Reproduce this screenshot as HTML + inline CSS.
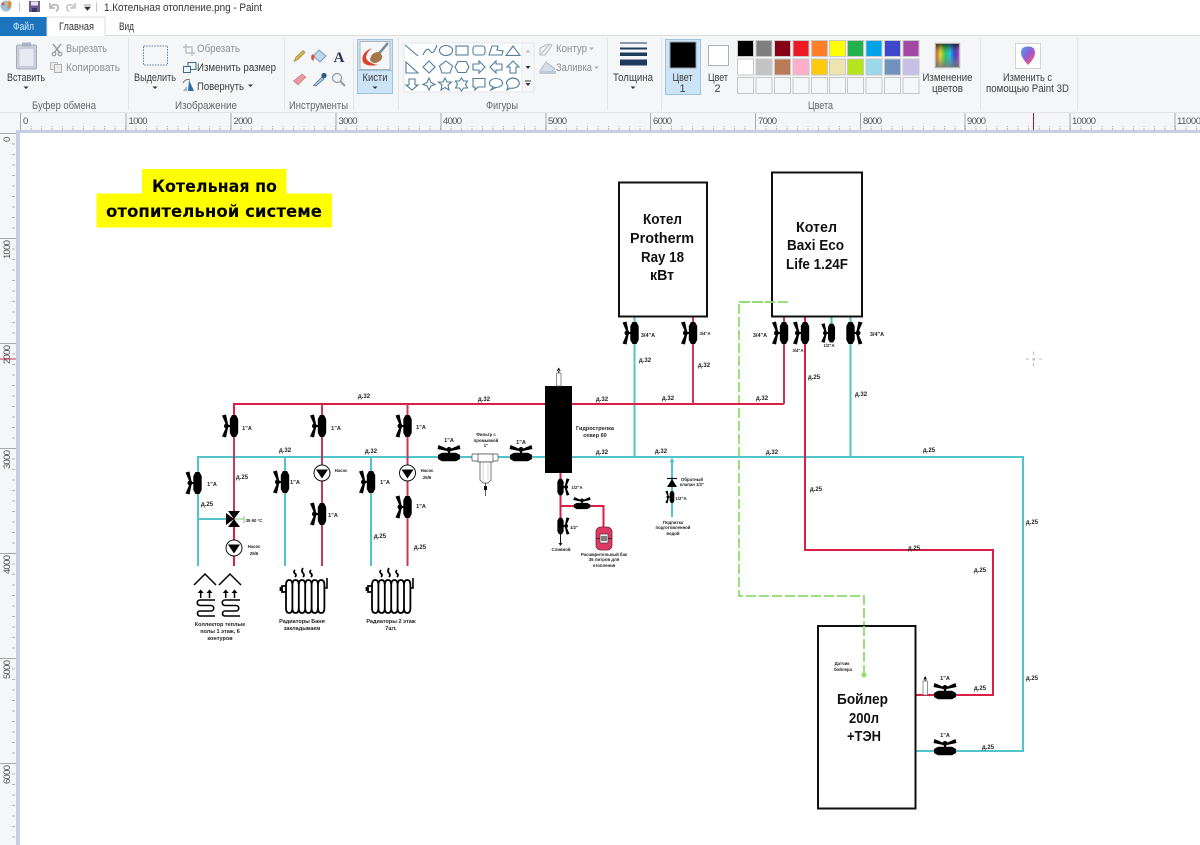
<!DOCTYPE html>
<html lang="ru"><head><meta charset="utf-8"><title>Paint</title>
<style>
html,body{margin:0;padding:0;width:1200px;height:845px;overflow:hidden;background:#fff}
svg{display:block;position:absolute;left:0;top:0;filter:blur(.35px)}
text{font-family:"Liberation Sans","DejaVu Sans",sans-serif}
.r{font-size:11px;fill:#3c3c3c}
.c{text-anchor:middle}
.g{fill:#8e8e8e}
.l{font-size:11px;fill:#666;text-anchor:middle}
.h{font-weight:bold;font-size:14.5px;fill:#111;text-anchor:middle}
.d{font-size:6px;font-weight:bold;fill:#222;text-anchor:middle}
.s{font-size:5.5px;font-weight:bold;fill:#222;text-anchor:middle}
.x{font-size:4.3px;font-weight:bold;fill:#222;text-anchor:middle}
.p{fill:none;stroke-width:2}
.sh{fill:none;stroke:#4f7d9c;stroke-width:1.1}
</style></head><body>
<svg width="1200" height="845" viewBox="0 0 1200 845" xmlns="http://www.w3.org/2000/svg">
<defs>
<g id="v">
<path d="M-2,-11H2L4.200,-7V7L2,11H-2L-4.200,7V-7Z" fill="#000"/>
<rect x="-7.500" y="-1" width="4" height="2" fill="#000"/>
<circle cx="-7.500" cy="0" r="2.500" fill="#000"/>
<path d="M-7.500,0L-12,-10.500L-8,-11.500L-6,-2ZM-7.500,0L-12,10.500L-8,11.500L-6,2Z" fill="#000"/>
</g>
<g id="pu"><circle r="8" fill="#fff" stroke="#111" stroke-width="1"/><path d="M-6,-3.500H6L0,5.500Z" fill="#000"/></g>
<g id="rad">
<path d="M0,5Q0,0 3.200,0Q6.400,0 6.400,5V28Q6.400,33 3.200,33Q0,33 0,28ZM6.400,5Q6.400,0 9.600,0Q12.800,0 12.800,5V28Q12.800,33 9.600,33Q6.400,33 6.400,28ZM12.800,5Q12.800,0 16,0Q19.200,0 19.200,5V28Q19.200,33 16,33Q12.800,33 12.800,28ZM19.200,5Q19.200,0 22.400,0Q25.600,0 25.600,5V28Q25.600,33 22.400,33Q19.200,33 19.200,28ZM25.600,5Q25.600,0 28.800,0Q32,0 32,5V28Q32,33 28.800,33Q25.600,33 25.600,28ZM32,5Q32,0 35.200,0Q38.400,0 38.400,5V28Q38.400,33 35.200,33Q32,33 32,28Z" fill="#fff" stroke="#000" stroke-width="1.800"/>
<path d="M0,6H-4V12H0" fill="none" stroke="#000" stroke-width="1.800"/><path d="M-5.500,7V11" stroke="#000" stroke-width="1.800"/>
<path d="M38.400,8H41V-2" fill="none" stroke="#000" stroke-width="1.600"/>
<path d="M9,-10Q7,-8 9,-6.500Q11,-5 9,-3M17,-12Q15,-9 17,-7Q19,-5 17,-3M25,-10Q23,-8 25,-6.500Q27,-5 25,-3" fill="none" stroke="#000" stroke-width="1.800"/>
</g>
<g id="fl">
<path d="M0,11L11,0L22,11" fill="none" stroke="#000" stroke-width="1.500"/>
<path d="M6.700,24V17M15.500,24V17" stroke="#000" stroke-width="1.500"/>
<path d="M3.700,19L6.700,15.500L9.700,19ZM12.500,19L15.500,15.500L18.500,19Z" fill="#000"/>
<path d="M21,26H6A2.750,2.750 0 0 0 6,31.500H17A2.750,2.750 0 0 1 17,37H6A2.500,2.500 0 0 0 6,42H21" fill="none" stroke="#000" stroke-width="1.600"/>
</g>
<pattern id="tt" x="20" y="0" width="10.5" height="4" patternUnits="userSpaceOnUse"><rect width="1" height="3" fill="#b4b4b4"/></pattern>
<pattern id="tl" x="0" y="133" width="4" height="10.5" patternUnits="userSpaceOnUse"><rect width="3" height="1" fill="#b4b4b4"/></pattern>
<linearGradient id="cg" x1="0" x2="1" y1="0" y2="0"><stop offset="0" stop-color="#e2362c"/><stop offset=".2" stop-color="#ece32a"/><stop offset=".4" stop-color="#28c95a"/><stop offset=".6" stop-color="#1fc5e0"/><stop offset=".8" stop-color="#3040d8"/><stop offset="1" stop-color="#d02ac0"/></linearGradient>
<linearGradient id="cv" x1="0" x2="0" y1="0" y2="1"><stop offset="0" stop-color="#000" stop-opacity=".65"/><stop offset=".45" stop-color="#888" stop-opacity="0"/><stop offset="1" stop-color="#777" stop-opacity=".85"/></linearGradient>
<linearGradient id="p3" x1="0" x2="1" y1="0" y2="1"><stop offset="0" stop-color="#3fa6e8"/><stop offset=".5" stop-color="#9a58d8"/><stop offset=".8" stop-color="#ef5a74"/><stop offset="1" stop-color="#f4b030"/></linearGradient>
</defs>

<rect width="1200" height="845" fill="#fff"/>

<!-- title bar -->
<g>
<circle cx="6" cy="6" r="5.500" fill="#9ec0d8"/><circle cx="3" cy="4" r="1.500" fill="#e25b3a"/><circle cx="8" cy="3" r="1.500" fill="#e8b93c"/><path d="M9,0L12,3L9,9L7,8Z" fill="#d98c44"/>
<rect x="19" y="2" width="1" height="10" fill="#c8c8c8"/>
<rect x="29" y="1" width="11" height="11" fill="#6f5a93"/><rect x="31" y="1.500" width="7" height="4" fill="#e6e2ee"/><rect x="32" y="8" width="5" height="4" fill="#3c3560"/>
<path d="M50,3V8H55M50,8Q54,2.500 58,6Q59,9 56,11.500" fill="none" stroke="#b9b9b9" stroke-width="1.800"/>
<path d="M75,3V8H70M75,8Q71,2.500 67,6Q66,9 69,11.500" fill="none" stroke="#c9c9c9" stroke-width="1.800"/>
<path d="M84,5H91M84.500,7H90.500L87.500,10.500Z" fill="#333" stroke="#333" stroke-width=".5"/>
<rect x="96" y="2" width="1" height="10" fill="#c8c8c8"/>
<text x="104" y="11" font-size="11.200" fill="#333" textLength="158" lengthAdjust="spacingAndGlyphs">1.Котельная отопление.png - Paint</text>
</g>

<!-- tabs -->
<rect x="0" y="17" width="1200" height="19" fill="#fff"/>
<rect x="0" y="35" width="1200" height="1" fill="#dcdddf"/>
<rect x="0" y="17" width="47" height="19" fill="#1b74bd"/>
<text x="23.500" y="30" font-size="11" fill="#d8ecfb" text-anchor="middle" textLength="21" lengthAdjust="spacingAndGlyphs">Файл</text>
<path d="M47,36V17H105V36" fill="#fff" stroke="#dcdddf"/>
<text x="76.500" y="30" font-size="11" fill="#333" text-anchor="middle" textLength="35" lengthAdjust="spacingAndGlyphs">Главная</text>
<text x="126.500" y="30" font-size="11" fill="#333" text-anchor="middle" textLength="15" lengthAdjust="spacingAndGlyphs">Вид</text>

<!-- ribbon -->
<rect x="0" y="36" width="1200" height="76" fill="#f5f6f7"/>
<rect x="0" y="112" width="1200" height="1" fill="#e3e4e6"/>
<g fill="#e4e5e7">
<rect x="128" y="38" width="1" height="72"/><rect x="284" y="38" width="1" height="72"/><rect x="353" y="38" width="1" height="72"/><rect x="398" y="38" width="1" height="72"/><rect x="607" y="38" width="1" height="72"/><rect x="661" y="38" width="1" height="72"/><rect x="980" y="38" width="1" height="72"/><rect x="1077" y="38" width="1" height="72"/>
</g>

<!-- clipboard -->
<rect x="16.500" y="45" width="20" height="24" rx="1.500" fill="#c9ced8" stroke="#a4adbd"/>
<rect x="19" y="48.500" width="15" height="18" fill="#e8eaf2" stroke="#b8bfd0" stroke-width=".6"/>
<rect x="22" y="42.500" width="9" height="4" fill="#aab3c4"/>
<text x="26" y="81" class="r c" textLength="38" lengthAdjust="spacingAndGlyphs">Вставить</text>
<path d="M23.500,86.500H28.500L26,89Z" fill="#333"/>
<path d="M53,44L60,53M61,44L54,53" stroke="#9b9b9b" stroke-width="1.500"/><circle cx="54" cy="54" r="1.800" fill="none" stroke="#9b9b9b" stroke-width="1.200"/><circle cx="60" cy="54" r="1.800" fill="none" stroke="#9b9b9b" stroke-width="1.200"/>
<text x="66" y="52" class="r g" textLength="41" lengthAdjust="spacingAndGlyphs">Вырезать</text>
<rect x="50.500" y="62.500" width="7" height="7" fill="#e8e8e8" stroke="#bdbdbd"/><rect x="54.500" y="64.500" width="7" height="8" fill="#ececec" stroke="#b0b0b0"/>
<text x="66" y="71" class="r g" textLength="54" lengthAdjust="spacingAndGlyphs">Копировать</text>
<text x="64" y="109" class="l" textLength="64" lengthAdjust="spacingAndGlyphs">Буфер обмена</text>

<!-- select -->
<rect x="143.500" y="46" width="24" height="19" fill="none" stroke="#5878a8" stroke-width="1" stroke-dasharray="1.500 1.200"/>
<text x="155" y="81" class="r c" textLength="42" lengthAdjust="spacingAndGlyphs">Выделить</text>
<path d="M152.500,86.500H157.500L155,89Z" fill="#333"/>
<path d="M186,44V53H195M183,47H192V56" fill="none" stroke="#b4b8bd" stroke-width="1.200"/>
<text x="197" y="52" class="r g" textLength="43" lengthAdjust="spacingAndGlyphs">Обрезать</text>
<rect x="188" y="62.500" width="8" height="7" fill="#eef3f8" stroke="#3c6a92"/><rect x="183.500" y="66.500" width="7" height="6" fill="#f5f6f7" stroke="#3c6a92"/>
<text x="197" y="71" class="r" textLength="79" lengthAdjust="spacingAndGlyphs">Изменить размер</text>
<path d="M189,80L194,91H188Z" fill="#2e6ea8"/><path d="M183,91L187,86V91Z" fill="#8fb4d6"/><path d="M183,83Q186,78 190,80" fill="none" stroke="#777" stroke-width="1"/>
<text x="197" y="90" class="r" textLength="47" lengthAdjust="spacingAndGlyphs">Повернуть</text>
<path d="M248,84.500H253L250.500,87Z" fill="#333"/>
<text x="206" y="109" class="l" textLength="62" lengthAdjust="spacingAndGlyphs">Изображение</text>

<!-- tools -->
<path d="M294,61.500L296,57L303,50.500L305,52.500L298,59.500Z" fill="#d9b64d" stroke="#8d7b45" stroke-width=".6"/>
<path d="M319,50L326,56L320,62L313,56Z" fill="#bcd9ee" stroke="#7d9db8"/><path d="M312,54Q310,59 313,61L315,56Z" fill="#d9533a"/>
<text x="339" y="62" font-size="15" font-weight="bold" fill="#1e3350" text-anchor="middle" style="font-family:'Liberation Serif',serif">A</text>
<path d="M293.500,81L302,74L306,77L298,85Z" fill="#e89aa0" stroke="#c47a80" stroke-width=".6"/>
<path d="M313.500,85.500L322,77L324,79L316,86Z" fill="#a9c4dc" stroke="#557a9c" stroke-width=".8"/><circle cx="324" cy="75.500" r="2.600" fill="#2c5b86"/>
<circle cx="337" cy="78" r="4.500" fill="#edf3f8" stroke="#8f9aa4" stroke-width="1.200"/><path d="M340.500,81.500L345,86" stroke="#8f9aa4" stroke-width="2"/>
<text x="318.500" y="109" class="l" textLength="59" lengthAdjust="spacingAndGlyphs">Инструменты</text>

<!-- brush -->
<rect x="357.500" y="39.500" width="35" height="54" fill="#cde4f7" stroke="#9ac3e4"/>
<rect x="360" y="41.500" width="30" height="28" fill="#f4f7fa" stroke="#b3b3b3"/>
<path d="M388,43L376,57" stroke="#7a8b98" stroke-width="2.500"/>
<path d="M379,52Q371,52 370,60Q374,66 381,60Q384,56 379,52Z" fill="#a5764a"/>
<path d="M372,48Q360,53 363,62Q366,67 378,65Q368,63 366,58Q366,53 372,48Z" fill="#d9452a"/>
<rect x="358" y="70" width="34" height="1" fill="#9ac3e4"/>
<text x="375" y="81" class="r c" textLength="25" lengthAdjust="spacingAndGlyphs">Кисти</text>
<path d="M372.500,86.500H377.500L375,89Z" fill="#333"/>

<!-- shapes gallery -->
<rect x="404" y="43" width="118" height="49" fill="#fff" stroke="#e3e6ea"/>
<rect x="522" y="43" width="12" height="49" fill="#f6f7f8" stroke="#e3e6ea"/>
<path d="M525.500,52.500H530.500L528,49.500Z" fill="#bdbdbd"/><path d="M525.500,66H530.500L528,69Z" fill="#333"/><path d="M525,80.500H531V81.500H525ZM525.500,83H530.500L528,86Z" fill="#333"/>
<g class="sh">
<path d="M405,45L418,56"/>
<path d="M423,55Q427,46 430,51T437,45"/>
<ellipse cx="446" cy="50.500" rx="6.500" ry="5"/>
<rect x="456" y="46" width="12" height="9"/>
<rect x="473" y="46" width="12" height="9" rx="2.500"/>
<path d="M489,55L492,46H498L497,50L503,51L502,55Z"/>
<path d="M513,46L506,55.500H520Z"/>
<path d="M406,62V73H418Z"/>
<path d="M429,61L435,67L429,73L423,67Z"/>
<path d="M446,61L452.500,66L450,73H442L439.500,66Z"/>
<path d="M458,61.500H466L469,67L466,72.500H458L455,67Z"/>
<path d="M473,64H479V61L485,67L479,73V70H473Z"/>
<path d="M502,64H496V61L490,67L496,73V70H502Z"/>
<path d="M513,61L519,67H516V73H510V67H507Z"/>
<path d="M409,79H415V85H418L412,90L406,85H409Z" />
<path d="M429,78L431,82.500L435,84.500L431,86L429,90L427,86L423,84.500L427,82.500Z"/>
<path d="M445,78L447,82H451.500L448,85L449,90L445,87.500L441,90L442,85L438.500,82H443Z"/>
<path d="M461.500,78L463.500,81H467.500L465.500,84.500L467.500,88H463.500L461.500,91L459.500,88H455.500L457.500,84.500L455.500,81H459.500Z"/>
<path d="M473,78.500H485V87H478L475,90V87H473Z"/>
<ellipse cx="496" cy="83" rx="6.500" ry="4.500"/><path d="M493,87L491,90L496,87.500"/>
<path d="M508,80Q513,76 518,80Q521,84 517,87Q513,89 510,88L507,90L508,86Q505,83 508,80Z"/>
</g>
<path d="M540,55L540,48L548,44L552,45L545,55Z" fill="none" stroke="#b3b7bc" stroke-width="1"/><path d="M549,45L541,54" stroke="#b3b7bc"/>
<text x="556" y="52" class="r g" textLength="31" lengthAdjust="spacingAndGlyphs">Контур</text>
<path d="M589,47.500H594L591.500,50Z" fill="#b0b0b0"/>
<path d="M546,62L555,69L549,73H540V71Z" fill="#d6dfe8" stroke="#a9bac9"/><rect x="540" y="71" width="16" height="3" fill="#b9cad9"/>
<text x="556" y="71" class="r g" textLength="36" lengthAdjust="spacingAndGlyphs">Заливка</text>
<path d="M594,66.500H599L596.500,69Z" fill="#b0b0b0"/>
<text x="502" y="109" class="l" textLength="32" lengthAdjust="spacingAndGlyphs">Фигуры</text>

<!-- thickness -->
<rect x="620" y="42.500" width="27" height="1" fill="#1f3a5f"/><rect x="620" y="47.500" width="27" height="2" fill="#1f3a5f"/><rect x="620" y="52.500" width="27" height="3.500" fill="#1f3a5f"/><rect x="620" y="59.500" width="27" height="6" fill="#1f3a5f"/>
<text x="633" y="81" class="r c" textLength="40" lengthAdjust="spacingAndGlyphs">Толщина</text>
<path d="M630.500,86.500H635.500L633,89Z" fill="#333"/>

<!-- colors -->
<rect x="665.500" y="39.500" width="35" height="55" fill="#cde4f7" stroke="#9ac3e4"/>
<rect x="670" y="42" width="26" height="26" fill="#000" stroke="#8fa0ad" stroke-width="1"/>
<text x="682.500" y="81" class="r c" textLength="20" lengthAdjust="spacingAndGlyphs">Цвет</text><text x="682.500" y="92" class="r c">1</text>
<rect x="708.500" y="45.500" width="20" height="20" fill="#fff" stroke="#b0b0b0"/>
<text x="718" y="81" class="r c" textLength="20" lengthAdjust="spacingAndGlyphs">Цвет</text><text x="717.500" y="92" class="r c">2</text>
<g stroke="#c8c8c8" stroke-width="1">
<rect x="737.500" y="40.500" width="16" height="16" fill="#000"/><rect x="756" y="40.500" width="16" height="16" fill="#7f7f7f"/><rect x="774.500" y="40.500" width="16" height="16" fill="#880015"/><rect x="793" y="40.500" width="16" height="16" fill="#ed1c24"/><rect x="811.500" y="40.500" width="16" height="16" fill="#ff7f27"/><rect x="829.500" y="40.500" width="16" height="16" fill="#ffff00"/><rect x="847.500" y="40.500" width="16" height="16" fill="#22b14c"/><rect x="866" y="40.500" width="16" height="16" fill="#00a2e8"/><rect x="884.500" y="40.500" width="16" height="16" fill="#3f48cc"/><rect x="903" y="40.500" width="16" height="16" fill="#a349a4"/>
<rect x="737.500" y="59" width="16" height="16" fill="#fff"/><rect x="756" y="59" width="16" height="16" fill="#c3c3c3"/><rect x="774.500" y="59" width="16" height="16" fill="#b97a57"/><rect x="793" y="59" width="16" height="16" fill="#ffaec9"/><rect x="811.500" y="59" width="16" height="16" fill="#ffc90e"/><rect x="829.500" y="59" width="16" height="16" fill="#efe4b0"/><rect x="847.500" y="59" width="16" height="16" fill="#b5e61d"/><rect x="866" y="59" width="16" height="16" fill="#99d9ea"/><rect x="884.500" y="59" width="16" height="16" fill="#7092be"/><rect x="903" y="59" width="16" height="16" fill="#c8bfe7"/>
<g fill="#f5f6f7"><rect x="737.500" y="77.500" width="16" height="16"/><rect x="756" y="77.500" width="16" height="16"/><rect x="774.500" y="77.500" width="16" height="16"/><rect x="793" y="77.500" width="16" height="16"/><rect x="811.500" y="77.500" width="16" height="16"/><rect x="829.500" y="77.500" width="16" height="16"/><rect x="847.500" y="77.500" width="16" height="16"/><rect x="866" y="77.500" width="16" height="16"/><rect x="884.500" y="77.500" width="16" height="16"/><rect x="903" y="77.500" width="16" height="16"/></g>
</g>
<text x="820.500" y="109" class="l" textLength="25" lengthAdjust="spacingAndGlyphs">Цвета</text>
<rect x="935.500" y="43.500" width="24" height="24" fill="url(#cg)" stroke="#b5b5b5" stroke-width="1.500"/><rect x="936" y="44" width="23" height="23" fill="url(#cv)"/>
<text x="947.500" y="81" class="r c" textLength="50" lengthAdjust="spacingAndGlyphs">Изменение</text><text x="947.500" y="92" class="r c" textLength="31" lengthAdjust="spacingAndGlyphs">цветов</text>
<rect x="1015.500" y="43.500" width="25" height="25" fill="#fff" stroke="#d2d2d2"/>
<path d="M1028,65Q1021,57 1021,53Q1021,46.500 1028,46.500Q1035,46.500 1035,53Q1035,58 1028,65Z" fill="url(#p3)"/>
<text x="1027.500" y="81" class="r c" textLength="49" lengthAdjust="spacingAndGlyphs">Изменить с</text><text x="1027.500" y="92" class="r c" textLength="83" lengthAdjust="spacingAndGlyphs">помощью Paint 3D</text>

<!-- rulers -->
<rect x="0" y="113" width="1200" height="17" fill="#f5f6f7"/>
<rect x="0" y="130" width="16" height="715" fill="#f5f6f7"/>
<rect x="20" y="126" width="1180" height="4" fill="url(#tt)"/>
<rect x="12" y="133" width="4" height="712" fill="url(#tl)"/>
<g fill="#a8a8a8">
<rect x="20" y="113" width="1" height="17"/><rect x="125.500" y="113" width="1" height="17"/><rect x="230.500" y="113" width="1" height="17"/><rect x="335.500" y="113" width="1" height="17"/><rect x="440.500" y="113" width="1" height="17"/><rect x="545.500" y="113" width="1" height="17"/><rect x="650" y="113" width="1" height="17"/><rect x="755" y="113" width="1" height="17"/><rect x="860" y="113" width="1" height="17"/><rect x="964.500" y="113" width="1" height="17"/><rect x="1069.500" y="113" width="1" height="17"/><rect x="1174.500" y="113" width="1" height="17"/>
<rect x="0" y="133" width="16" height="1"/><rect x="0" y="238" width="16" height="1"/><rect x="0" y="343" width="16" height="1"/><rect x="0" y="448" width="16" height="1"/><rect x="0" y="553" width="16" height="1"/><rect x="0" y="658" width="16" height="1"/><rect x="0" y="763" width="16" height="1"/>
</g>
<g font-size="9.500" fill="#555">
<text x="23" y="124">0</text><text x="128.500" y="124" textLength="19">1000</text><text x="233.500" y="124" textLength="19">2000</text><text x="338.500" y="124" textLength="19">3000</text><text x="443" y="124" textLength="19">4000</text><text x="548" y="124" textLength="19">5000</text><text x="653" y="124" textLength="19">6000</text><text x="758" y="124" textLength="19">7000</text><text x="863" y="124" textLength="19">8000</text><text x="967" y="124" textLength="19">9000</text><text x="1072" y="124" textLength="24">10000</text><text x="1177" y="124" textLength="24">11000</text>
<text transform="translate(10,142) rotate(-90)">0</text>
<text transform="translate(10,259) rotate(-90)" textLength="19">1000</text>
<text transform="translate(10,364) rotate(-90)" textLength="19">2000</text>
<text transform="translate(10,469) rotate(-90)" textLength="19">3000</text>
<text transform="translate(10,574) rotate(-90)" textLength="19">4000</text>
<text transform="translate(10,679) rotate(-90)" textLength="19">5000</text>
<text transform="translate(10,784) rotate(-90)" textLength="19">6000</text>
</g>
<rect x="1033" y="113" width="1" height="17" fill="#a01840"/>
<rect x="0" y="358.500" width="16" height="1" fill="#c03050"/>
<rect x="16" y="130" width="1184" height="3" fill="#c6d0e2"/>
<rect x="16" y="130" width="4" height="715" fill="#c6d0e2"/>
<rect x="20" y="133" width="1180" height="712" fill="#fff"/>

<!-- crosshair -->
<path d="M1033.500,351.500V355M1033.500,363V366.500M1026,359H1029M1039,359H1042M1033,358.500H1034.500V360H1033Z" stroke="#bdbdbd" stroke-width="1" fill="none"/>

<!-- title -->
<rect x="142" y="169" width="144.500" height="25" fill="#ffff00"/>
<rect x="96.500" y="193.500" width="235.500" height="34" fill="#ffff00"/>
<text x="214.500" y="192" font-size="16.500" font-weight="bold" text-anchor="middle" fill="#000" textLength="125" lengthAdjust="spacingAndGlyphs" style="font-family:'DejaVu Sans',sans-serif">Котельная по</text>
<text x="214" y="217" font-size="16.500" font-weight="bold" text-anchor="middle" fill="#000" textLength="216" lengthAdjust="spacingAndGlyphs" style="font-family:'DejaVu Sans',sans-serif">отопительной системе</text>

<!-- pipes: green -->
<path d="M789,302H739V596H864V675" fill="none" stroke="#8fdc6e" stroke-width="1.800" stroke-dasharray="10 3"/>

<!-- teal -->
<g class="p" stroke="#50c3cb">
<path d="M198,566V457H1023V751H916"/>
<path d="M198,519H228"/>
<path d="M285,457V566M371,457V566M634.500,316V457M850.500,316V457M831.500,316V325"/>
<path d="M672,460V517"/>
</g>
<path d="M672,458L669.500,462H674.500Z" fill="#50c3cb"/>
<!-- red -->
<g class="p" stroke="#d81f45">
<path d="M234,566V404H784"/>
<path d="M805,316V550H993V695H916"/>
<path d="M560.500,473V522M560.500,506H603.500V527"/>
</g>
<g class="p" stroke="#c43a5c">
<path d="M322,404V566M407.500,404V566M693,316V404M784,316V404M234,437V510"/>
</g>

<!-- boxes -->
<g fill="#fff" stroke="#111" stroke-width="2">
<rect x="619" y="182.500" width="88" height="134"/>
<rect x="772" y="172.500" width="90" height="144"/>
<rect x="818" y="626" width="97.500" height="182.500"/>
</g>
<path d="M739,302H789" fill="none" stroke="#8fdc6e" stroke-width="1.800" stroke-dasharray="10 3"/>
<path d="M864,626V675" fill="none" stroke="#8fdc6e" stroke-width="1.800" stroke-dasharray="10 3"/>
<circle cx="864" cy="675" r="2.500" fill="#8fdc6e"/>
<text class="h" x="662.500" y="224" textLength="39" lengthAdjust="spacingAndGlyphs">Котел</text><text class="h" x="662" y="243" textLength="64" lengthAdjust="spacingAndGlyphs">Protherm</text><text class="h" x="662.500" y="262" textLength="43" lengthAdjust="spacingAndGlyphs">Ray 18</text><text class="h" x="662" y="280" textLength="24" lengthAdjust="spacingAndGlyphs">кВт</text>
<text class="h" x="816.500" y="232" textLength="41" lengthAdjust="spacingAndGlyphs">Котел</text><text class="h" x="815.500" y="250" textLength="57" lengthAdjust="spacingAndGlyphs">Baxi Eco</text><text class="h" x="817" y="269" textLength="62" lengthAdjust="spacingAndGlyphs">Life 1.24F</text>
<text class="h" x="862.500" y="704" textLength="51" lengthAdjust="spacingAndGlyphs">Бойлер</text><text class="h" x="864" y="723" textLength="30" lengthAdjust="spacingAndGlyphs">200л</text><text class="h" x="864" y="741" textLength="34" lengthAdjust="spacingAndGlyphs">+ТЭН</text>

<!-- hydro -->
<rect x="545" y="386" width="27" height="87" fill="#000"/>
<rect x="556.500" y="373" width="4.500" height="13" fill="#fff" stroke="#666" stroke-width=".7"/>
<path d="M558.700,367.500L556.700,371H560.700Z M558.300,370H559.300V373H558.300Z" fill="#000"/>

<!-- valves vertical -->
<use href="#v" transform="translate(234,426)"/>
<use href="#v" transform="translate(322,426)"/>
<use href="#v" transform="translate(407.500,426)"/>
<use href="#v" transform="translate(197.500,483)"/>
<use href="#v" transform="translate(285,482)"/>
<use href="#v" transform="translate(322,514)"/>
<use href="#v" transform="translate(407.500,507)"/>
<use href="#v" transform="translate(371,482)"/>
<use href="#v" transform="translate(634.500,333)"/>
<use href="#v" transform="translate(693,333)"/>
<use href="#v" transform="translate(784,333)"/>
<use href="#v" transform="translate(805,333)"/>
<use href="#v" transform="translate(831.500,333) scale(.85)"/>
<use href="#v" transform="translate(850.500,333) scale(-1,1)"/>
<use href="#v" transform="translate(560.500,487) scale(-.75,.75)"/>
<use href="#v" transform="translate(560.500,526) scale(-.75,.75)"/>
<use href="#v" transform="translate(672,497) scale(.55)"/>
<!-- valves horizontal -->
<use href="#v" transform="translate(449,457) rotate(90)"/>
<use href="#v" transform="translate(521,457) rotate(90)"/>
<use href="#v" transform="translate(582,506) rotate(90) scale(.75)"/>
<use href="#v" transform="translate(945,695) rotate(90)"/>
<use href="#v" transform="translate(945,751) rotate(90)"/>
<!-- drain -->
<path d="M560.500,533V543" stroke="#111" stroke-width="1"/><path d="M558.500,543H562.500L560.500,546Z" fill="#111"/>

<!-- pumps -->
<use href="#pu" transform="translate(234,548)"/>
<use href="#pu" transform="translate(322,473)"/>
<use href="#pu" transform="translate(407.500,473)"/>
<!-- 3-way -->
<path d="M228,511H240L234,519ZM228,527H240L234,519ZM226,513V525L234,519Z" fill="#000"/>
<path d="M234,519H244M244,516V523" stroke="#7bc96f" stroke-width="1"/>
<!-- check valve -->
<path d="M667,478.500H677" stroke="#000" stroke-width="1.200"/><path d="M667,487H677L672,479Z" fill="#000"/>
<!-- filter -->
<g fill="#fff" stroke="#444" stroke-width=".7">
<rect x="472" y="454" width="26" height="7" rx="1"/>
<rect x="478" y="454" width="15" height="8"/>
<path d="M480,462H491V480L488,483H483L480,480Z"/>
</g>
<path d="M483,463V480M488,463V480" stroke="#bbb" stroke-width=".6"/>
<path d="M485.500,483V496" stroke="#333" stroke-width=".8"/><rect x="484" y="486" width="3" height="4" fill="#111"/>
<!-- tank -->
<rect x="596" y="527" width="16" height="23" rx="5" fill="#dc3a62" stroke="#7a2034" stroke-width=".8"/>
<path d="M596,538.500H612" stroke="#401018" stroke-width=".8"/>
<rect x="600" y="534" width="8" height="9" fill="#f3e9ea" stroke="#333" stroke-width=".6"/>
<path d="M602,536V541M604,536V541M606,536V541" stroke="#111" stroke-width="1"/>
<!-- vent boiler -->
<rect x="923" y="681" width="4.500" height="14" fill="#fff" stroke="#666" stroke-width=".7"/>
<path d="M925.200,676L923.400,679.500H927L925.200,676ZM924.800,679H925.600V681H924.800Z" fill="#000"/>

<!-- floor / radiators -->
<use href="#fl" transform="translate(194,574)"/>
<use href="#fl" transform="translate(219,574)"/>
<use href="#rad" transform="translate(286,580)"/>
<use href="#rad" transform="translate(372,580)"/>

<!-- pipe labels -->
<g>
<text class="d" x="364" y="398">д.32</text><text class="d" x="484" y="401">д.32</text><text class="d" x="602" y="401">д.32</text><text class="d" x="668" y="400">д.32</text><text class="d" x="762" y="400">д.32</text>
<text class="d" x="285" y="452">д.32</text><text class="d" x="371" y="453">д.32</text><text class="d" x="602" y="454">д.32</text><text class="d" x="661" y="453">д.32</text><text class="d" x="772" y="454">д.32</text><text class="d" x="929" y="452">д.25</text>
<text class="d" x="645" y="362">д.32</text><text class="d" x="704" y="367">д.32</text><text class="d" x="814" y="379">д.25</text><text class="d" x="861" y="396">д.32</text><text class="d" x="816" y="491">д.25</text><text class="d" x="914" y="550">д.25</text><text class="d" x="980" y="572">д.25</text><text class="d" x="1032" y="524">д.25</text><text class="d" x="1032" y="680">д.25</text><text class="d" x="980" y="690">д.25</text><text class="d" x="988" y="749">д.25</text>
<text class="d" x="242" y="479">д.25</text><text class="d" x="207" y="506">д.25</text><text class="d" x="380" y="538">д.25</text><text class="d" x="420" y="549">д.25</text>
</g>
<!-- valve labels -->
<text class="s" x="247" y="430">1"А</text><text class="s" x="336" y="430">1"А</text><text class="s" x="421" y="429">1"А</text><text class="s" x="212" y="486">1"А</text><text class="s" x="295" y="484">1"А</text><text class="s" x="333" y="517">1"А</text><text class="s" x="421" y="508">1"А</text><text class="s" x="385" y="484">1"А</text>
<text class="s" x="449" y="442">1"А</text><text class="s" x="521" y="444">1"А</text><text class="s" x="945" y="680">1"А</text><text class="s" x="945" y="737">1"А</text>
<text class="s" x="648" y="337">3/4"А</text><text class="x" x="705" y="335">3/4"А</text><text class="s" x="760" y="337">3/4"А</text><text class="x" x="798" y="352">3/4"А</text><text class="x" x="829" y="347">1/2"А</text><text class="s" x="877" y="336">3/4"А</text>
<text class="x" x="577" y="489">1/2"А</text><text class="x" x="574" y="529">1/2"</text><text class="x" x="681" y="500">1/2"А</text>
<text class="x" x="341" y="472">Насос</text><text class="x" x="427" y="472">Насос</text><text class="x" x="427" y="479">25/6</text><text class="x" x="254" y="548">Насос</text><text class="x" x="254" y="555">25/6</text><text class="x" x="254" y="522">35 60 °С</text>
<text class="x" x="486" y="436">Фильтр с</text><text class="x" x="486" y="442">промывкой</text><text class="x" x="486" y="447">1"</text>
<text class="s" x="595" y="430">Гидрострелка</text><text class="s" x="595" y="437">север 60</text>
<text class="x" x="692" y="481">Обратный</text><text class="x" x="692" y="486">клапан 1/2"</text>
<text class="x" x="673" y="524">Подпитка</text><text class="x" x="673" y="529">подготовленной</text><text class="x" x="673" y="535">водой</text>
<text class="x" x="561" y="551">Сливной</text>
<text class="x" x="604" y="556">Расширительный бак</text><text class="x" x="604" y="561">35 литров для</text><text class="x" x="604" y="567">отопления</text>
<text class="x" x="842" y="665">Датчик</text><text class="x" x="843" y="671">бойлера</text>
<text class="s" x="220" y="626">Коллектор теплые</text><text class="s" x="220" y="633">полы 1 этаж, 6</text><text class="s" x="220" y="640">контуров</text>
<text class="s" x="302" y="623">Радиаторы Баня</text><text class="s" x="302" y="630">закладываем</text>
<text class="s" x="391" y="623">Радиаторы 2 этаж</text><text class="s" x="391" y="630">7шт.</text>
</svg>
</body></html>
